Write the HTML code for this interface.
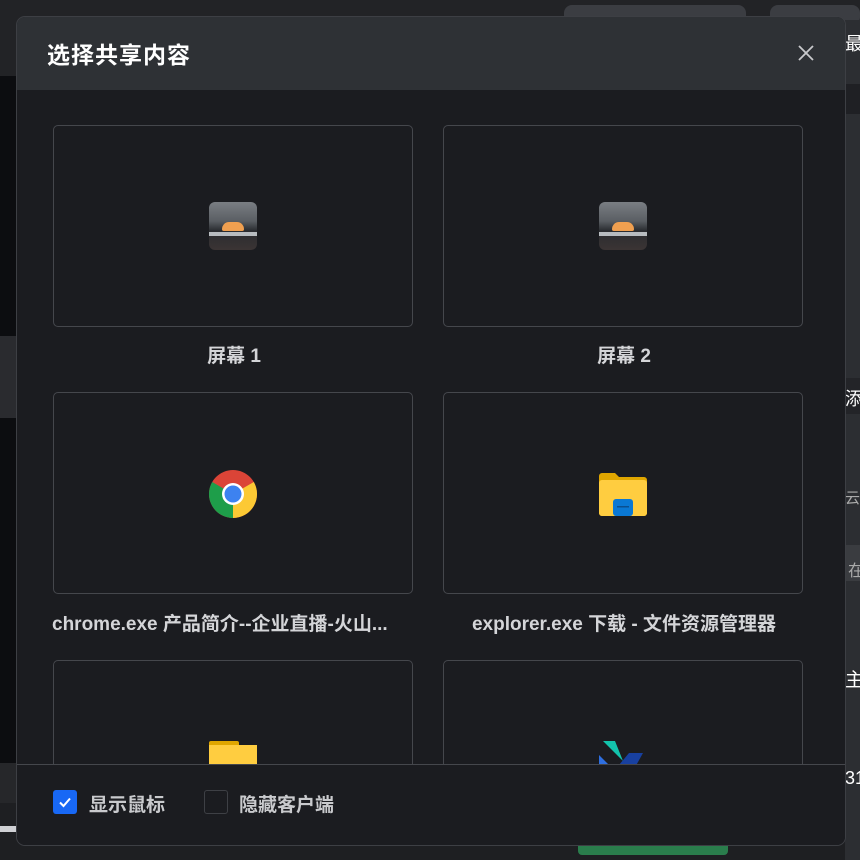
<!DOCTYPE html>
<html><head><meta charset="utf-8"><style>
*{margin:0;padding:0;box-sizing:border-box}
body{width:860px;height:860px;overflow:hidden;background:#1e1f22;font-family:"Liberation Sans","Noto Sans CJK SC",sans-serif;position:relative}
.a{position:absolute}
.modal{left:16px;top:16px;width:830px;height:830px;border:1px solid #3d3f44;border-radius:9px;background:#1b1c20;overflow:hidden}
.hd{left:0;top:0;width:100%;height:73px;background:#2e3135}
.card{position:absolute;width:360px;height:202px;border:1px solid #45474c;border-radius:5px}
.lbl{position:absolute;width:362px;text-align:center;color:#d4d5d8;font-size:19px;font-weight:bold;white-space:nowrap;overflow:hidden}
</style></head><body>
<div class="a" style="left:0;top:0;width:860px;height:76px;background:#222326"></div>
<div class="a" style="left:0;top:76px;width:16px;height:260px;background:#0c0d10"></div>
<div class="a" style="left:0;top:336px;width:16px;height:82px;background:#2a2b2f"></div>
<div class="a" style="left:0;top:418px;width:16px;height:345px;background:#0c0d10"></div>
<div class="a" style="left:0;top:763px;width:16px;height:40px;background:#26272a"></div>
<div class="a" style="left:0;top:826px;width:16px;height:6px;background:#cfd0d4"></div>
<div class="a" style="left:564px;top:5px;width:182px;height:20px;background:#3b3d42;border-radius:8px"></div>
<div class="a" style="left:770px;top:5px;width:90px;height:20px;background:#3b3d42;border-radius:8px"></div>
<div class="a" style="left:845px;top:20px;width:15px;height:840px;background:#2c2e32"></div>
<div class="a" style="left:845px;top:84px;width:15px;height:30px;background:#1f2024"></div>
<div class="a" style="left:845px;top:378px;width:15px;height:36px;background:#232428"></div>
<div class="a" style="left:845px;top:545px;width:15px;height:36px;background:#3a3c40"></div>
<div class="a" style="left:845px;top:30px;color:#fff;font-size:18px">最</div>
<div class="a" style="left:845px;top:385px;color:#fff;font-size:18px">添</div>
<div class="a" style="left:845px;top:487px;color:#aaa;font-size:15px">云</div>
<div class="a" style="left:848px;top:557px;color:#aaa;font-size:16px">在</div>
<div class="a" style="left:845px;top:665px;color:#fff;font-size:19px">主</div>
<div class="a" style="left:845px;top:768px;color:#fff;font-size:18px">31</div>
<div class="a" style="left:578px;top:845px;width:150px;height:10px;background:#2a7d4c;border-radius:0 0 4px 4px"></div>

<div class="a modal">
 <div class="a hd"></div>
 <div class="a" style="left:30px;top:19px;color:#fff;font-size:23px;font-weight:bold;letter-spacing:1px">选择共享内容</div>
 <svg class="a" style="left:780px;top:27px" width="18" height="18" viewBox="0 0 18 18"><path d="M2 2L16 16M16 2L2 16" stroke="#c8c9cc" stroke-width="1.8"/></svg>

 <div class="card" style="left:36px;top:108px"></div>
 <div class="card" style="left:426px;top:108px"></div>
 <div class="a" style="left:192px;top:185px;width:48px;height:48px;border-radius:6px;background:linear-gradient(#7a7e83 0%,#5a5e63 40%,#2a2c30 60%,#3b3434 100%)"><div class="a" style="left:13px;top:20px;width:22px;height:9px;border-radius:11px 11px 3px 3px;background:#f0a050"></div><div class="a" style="left:0;top:30px;width:48px;height:4px;background:#b8bcc0"></div></div>
 <div class="a" style="left:582px;top:185px;width:48px;height:48px;border-radius:6px;background:linear-gradient(#7a7e83 0%,#5a5e63 40%,#2a2c30 60%,#3b3434 100%)"><div class="a" style="left:13px;top:20px;width:22px;height:9px;border-radius:11px 11px 3px 3px;background:#f0a050"></div><div class="a" style="left:0;top:30px;width:48px;height:4px;background:#b8bcc0"></div></div>
 <div class="lbl" style="left:36px;top:324px">屏幕 1</div>
 <div class="lbl" style="left:426px;top:324px">屏幕 2</div>

 <div class="card" style="left:36px;top:375px"></div>
 <div class="card" style="left:426px;top:375px"></div>
 <svg class="a" style="left:192px;top:453px" width="48" height="48" viewBox="0 0 48 48">
  <circle cx="24" cy="24" r="24" fill="#db4437"/>
  <path d="M24 24L44.8 12A24 24 0 0 1 24 48Z" fill="#fcc934"/>
  <path d="M24 24L24 48A24 24 0 0 1 3.2 12Z" fill="#1e9e4a"/>
  <circle cx="24" cy="24" r="11" fill="#fff"/><circle cx="24" cy="24" r="8.5" fill="#3d82f0"/>
 </svg>
 <svg class="a" style="left:582px;top:455px" width="48" height="44" viewBox="0 0 48 44">
  <path d="M0 4a3 3 0 0 1 3-3h13l4 4h25a3 3 0 0 1 3 3v33a3 3 0 0 1-3 3H3a3 3 0 0 1-3-3Z" fill="#e0a600"/>
  <rect x="0" y="8" width="48" height="36" rx="3" fill="#ffcd40"/>
  <rect x="14" y="27" width="20" height="17" rx="3" fill="#0a78d4"/>
  <rect x="18" y="34" width="12" height="1.5" fill="#0a4f90"/>
 </svg>
 <div class="lbl" style="left:35px;top:592px;text-align:left">chrome.exe 产品简介--企业直播-火山...</div>
 <div class="lbl" style="left:426px;top:592px">explorer.exe 下载 - 文件资源管理器</div>

 <div class="card" style="left:36px;top:643px;height:220px"></div>
 <div class="card" style="left:426px;top:643px;height:220px"></div>
 <div class="a" style="left:192px;top:724px;width:30px;height:10px;background:#e0a600;border-radius:2px"></div>
 <div class="a" style="left:192px;top:728px;width:48px;height:30px;background:#ffcd40"></div>
 <svg class="a" style="left:582px;top:724px" width="48" height="30" viewBox="0 0 48 30"><path d="M4 0h12l8 20Z" fill="#13c3ac"/><path d="M0 14L16 30H0Z" fill="#2f6fe0"/><path d="M20 24L30 12h14L34 30Z" fill="#1840a0"/></svg>

 <div class="a" style="left:0;top:747px;width:100%;height:83px;background:#1b1c20;border-top:1px solid #45474c"></div>
 <div class="a" style="left:36px;top:773px;width:24px;height:24px;border-radius:3px;background:#1868f5"></div>
 <svg class="a" style="left:36px;top:773px" width="24" height="24" viewBox="0 0 24 24"><path d="M7 12.5l3.5 3.5L17 8.5" stroke="#fff" stroke-width="2" fill="none"/></svg>
 <div class="a" style="left:72px;top:773px;color:#c9cacd;font-size:19px;font-weight:bold">显示鼠标</div>
 <div class="a" style="left:187px;top:773px;width:24px;height:24px;border-radius:3px;border:1px solid #3e4045"></div>
 <div class="a" style="left:222px;top:773px;color:#c9cacd;font-size:19px;font-weight:bold">隐藏客户端</div>
</div>
</body></html>
